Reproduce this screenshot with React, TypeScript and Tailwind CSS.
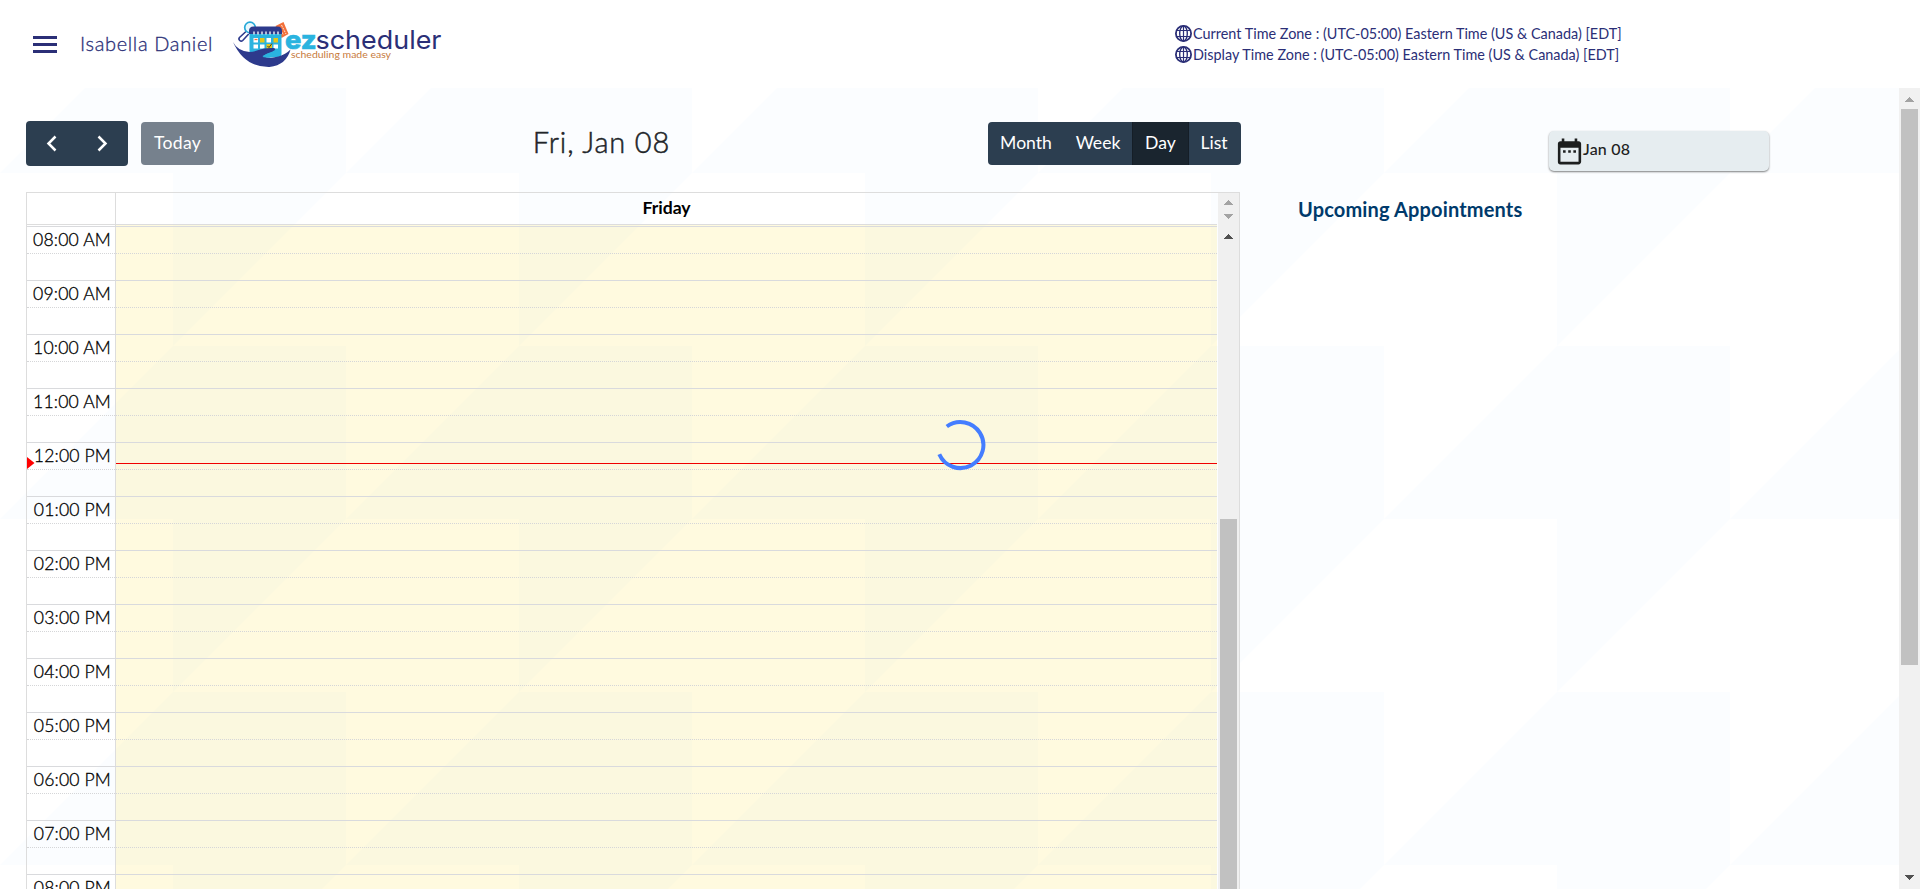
import React from "react";
import { MdDateRange } from "react-icons/md";

const hours = [
  "08:00 AM", "09:00 AM", "10:00 AM", "11:00 AM", "12:00 PM", "01:00 PM", "02:00 PM",
  "03:00 PM", "04:00 PM", "05:00 PM", "06:00 PM", "07:00 PM", "08:00 PM",
];

function Backdrop() {
  return (
    <svg className="absolute inset-0 h-full w-full" aria-hidden="true">
      <defs>
        <pattern id="tooth" width="346" height="346" patternUnits="userSpaceOnUse">
          <path d="M0 173 173 0H346V173L173 346V173Z" fill="#fbfdff" />
        </pattern>
      </defs>
      <rect width="100%" height="100%" fill="url(#tooth)" />
    </svg>
  );
}

function Logo() {
  return (
    <svg className="ml-[19px] mt-[1px] h-[50px] w-[215px] shrink-0" viewBox="-.5 0 215 50">
      <path d="M13.500 11.500 7 17.500a2.200 2.200 0 0 0 3.200 3l6-6.500" fill="#fff" stroke="#2d3a8c" strokeWidth="1.600" />
      <circle cx="17.500" cy="7.500" r="5.300" fill="#e9f8fd" stroke="#27a9d8" strokeWidth="1.700" />
      <path d="m43 6 8-4 5 12-7 4Z" fill="#f2703a" />
      <path d="m46 7 5 8m-2-10 4.500 9" stroke="#fff" strokeWidth=".8" strokeDasharray="2 1" />
      <rect x="17" y="8" width="32" height="29" rx="3" fill="#2ab3df" />
      <path d="M16.500 14V11q0-4.500 4.500-4.500h24Q49.500 6.500 49.500 11v3Z" fill="#2d3a8c" />
      <path d="M21.500 11.500v3m4-3v3m4-3v3m4-3v3m4-3v3m4-3v3m4-3v3" stroke="#fff" strokeWidth="1.300" />
      <path d="M21 18h4.500v4.500H21zm13 0h4.500v4.500H34zM21 24.500h4.500v4H21zm6.500 0H32v4h-4.500zm13.500 0h4.500v4H41zM27.500 30H32v3h-4.500z" fill="#fff" />
      <path d="M27.500 18H32v4.500h-4.500zm13.500 0h4.500v4.500H41zm-7 6h5.500v5H34z" fill="#e4c51d" />
      <path d="M22 19.500h3" stroke="#f2703a" strokeWidth="1.300" />
      <path d="m35 26 1.500 1.500 3-4" fill="none" stroke="#403d28" strokeWidth="1" />
      <path d="M.5 22Q5 31 17 32q4 0 9-2 6-2.500 15-2 4 1-1 3.500-5 2-10 4.500 7 3 16 .5 7-2 12-7Q54 45 37 47 12 47.500.5 22Z" fill="#2d3a8c" />
      <path d="M30 37q3-4 11-5l6-4v7q-7 4-17 2Z" fill="#2ab3df" />
      <text x="52.500" y="29" textLength="31.500" lengthAdjust="spacingAndGlyphs" fontFamily="Inter, sans-serif" fontSize="26" fontWeight="800" fill="#2ab3df" stroke="#2ab3df" strokeWidth=".6">ez</text>
      <text x="83" y="29" textLength="126" lengthAdjust="spacingAndGlyphs" fontFamily="Inter, sans-serif" fontSize="25.500" fontWeight="400" fill="#2b2f77">scheduler</text>
      <text x="58.500" y="38" textLength="100" lengthAdjust="spacingAndGlyphs" fontFamily="Lato, sans-serif" fontSize="10" fill="#c77a3c">scheduling made easy</text>
    </svg>
  );
}

function Globe() {
  return (
    <svg className="h-[17px] w-[17px] shrink-0" viewBox="0 0 17 17" fill="none" stroke="#2b2f77">
      <circle cx="8.500" cy="8.500" r="7.600" strokeWidth="1.800" />
      <ellipse cx="8.500" cy="8.500" rx="3.800" ry="7.500" strokeWidth="1.400" />
      <path d="M8.500 1v15M1.500 5.500h14M1.500 11.500h14" strokeWidth="1.200" />
    </svg>
  );
}

function Zone({ label }: { label: string }) {
  return (
    <div className="flex h-[21px] items-center">
      <Globe />
      <span className="ml-[1px] whitespace-nowrap text-[14.400px] tracking-[0.010px]">{label} Time Zone : (UTC-05:00) Eastern Time (US &amp; Canada) [EDT]</span>
    </div>
  );
}

function Arrow({ down = false, color }: { down?: boolean; color: string }) {
  return (
    <svg className="h-[5px] w-[9px] shrink-0" viewBox="0 0 9 5" fill={color} shapeRendering="crispEdges">
      <path d={down ? "M0 0h9L4.500 5Z" : "M0 5h9L4.500 0Z"} />
    </svg>
  );
}

function Chevron({ right = false }: { right?: boolean }) {
  return (
    <svg className="h-[17px] w-[11px]" viewBox="0 0 11 17" fill="none" stroke="#fff" strokeWidth="2.500">
      <path d={right ? "M1.500 1.500 8.500 8.500 1.500 15.500" : "M9.500 1.500 2.500 8.500 9.500 15.500"} />
    </svg>
  );
}

function Toolbar() {
  return (
    <div className="flex h-[45px] w-[1215px] items-center justify-between">
      <div className="flex w-[253px] items-center gap-[13px]">
        <div className="flex h-[45px] w-[102px] items-center justify-between rounded-[4px] bg-[#2c3e50] pl-[20px] pr-[20px]">
          <Chevron />
          <Chevron right />
        </div>
        <button className="h-[43px] w-[73px] rounded-[4px] bg-[#76818d] text-[17.600px] tracking-[0.300px] text-white">Today</button>
      </div>
      <h2 className="pb-[3px] pr-[64px] text-[29px] font-light tracking-[0.850px] text-[#212529] [-webkit-text-stroke:0.500px_#212529]">Fri, Jan 08</h2>
      <div className="flex h-[43px] overflow-hidden rounded-[4px] bg-[#2c3e50] text-[17.600px] text-white">
        <button className="w-[76px]">Month</button>
        <button className="w-[68px]">Week</button>
        <button className="w-[57px] border-x border-[#151e27] bg-[#1a252f]">Day</button>
        <button className="w-[52px] pr-[2px]">List</button>
      </div>
    </div>
  );
}

function Calendar() {
  return (
    <div className="mt-[26px] flex h-[697px] w-[1214px] border border-b-0 border-[#ddd]">
      <div className="relative flex w-[1190px] flex-col">
        <div className="flex h-[32px] shrink-0 border-b border-[#ddd]">
          <div className="w-[89px] border-r border-[#ddd]" />
          <div className="flex flex-1 items-center justify-center text-[17.600px] font-bold text-black">Friday</div>
        </div>
        <div className="relative flex-1 overflow-hidden">
          <div className="absolute inset-y-0 left-[88px] right-0 border-l border-[#ddd] bg-[rgba(255,220,40,0.15)]" />
          <div className="relative pt-px">
            {hours.map((h) => (
              <div key={h}>
                <div className="h-[27px] border-t border-[#d9dadd]">
                  <div className="flex h-[27px] w-[84px] items-center justify-end whitespace-nowrap text-[17.600px] font-light tracking-[0.150px] text-black [-webkit-text-stroke:0.300px_black]">{h}</div>
                </div>
                <div className="h-[27px] border-t border-dotted border-[#d5d6d8]" />
              </div>
            ))}
          </div>
          <div className="absolute left-[89px] right-0 top-[238px] h-px bg-[#f00000]" />
          <svg className="absolute left-0 top-[232px] h-[12px] w-[8px]" viewBox="0 0 8 12"><path d="M0 0 7.500 6 0 12Z" fill="red" /></svg>
          <svg className="absolute left-[909px] top-[194px] h-[52px] w-[52px]" viewBox="0 0 52 52" fill="none">
            <path d="M10.800 7.500A23 23 0 1 1 3.300 35.200" stroke="#447dff" strokeWidth="4" />
          </svg>
        </div>
      </div>
      <div className="ml-px flex w-[21px] flex-col items-center bg-[#f0f0f0]">
        <div className="flex h-[32px] flex-col items-center gap-[9px] pt-[7px]">
          <Arrow color="#a3a3a3" />
          <Arrow color="#a3a3a3" down />
        </div>
        <div className="mt-[9px]"><Arrow color="#505050" /></div>
        <div className="mt-auto h-[370px] w-[17px] bg-[#c1c1c1]" />
      </div>
    </div>
  );
}

export default function App() {
  return (
    <div className="relative flex h-[889px] w-[1920px] flex-col overflow-hidden bg-white font-['Lato',sans-serif]">
      <Backdrop />
      <header className="relative flex h-[88px] shrink-0 items-center bg-white pl-[33px] text-[#2b2f77]">
        <div className="flex w-[24px] flex-col gap-[4px]">
          <div className="h-[3px] bg-[#2b2f77]" />
          <div className="h-[3px] bg-[#2b2f77]" />
          <div className="h-[3px] bg-[#2b2f77]" />
        </div>
        <div className="ml-[23px] w-[133px] whitespace-nowrap pb-[2px] text-[20px] font-light tracking-[0.650px] [-webkit-text-stroke:0.300px_#2b2f77]">Isabella Daniel</div>
        <Logo />
        <div className="ml-[728px]">
          <Zone label="Current" />
          <Zone label="Display" />
        </div>
      </header>
      <main className="relative flex min-h-0 flex-1">
        <section className="w-[1298px] pl-[26px] pt-[33px]">
          <Toolbar />
          <Calendar />
        </section>
        <aside className="w-[601px] pt-[43px]">
          <div className="ml-[251px] flex h-[40px] w-[220px] items-center rounded-[5px] bg-[#e6edf0] pl-[5px] shadow-[0_1px_2px_rgba(0,0,0,0.5)]">
            <MdDateRange className="h-[31px] w-[31px] text-[#1d1f1f]" />
            <span className="-ml-[2px] pb-[4px] text-[16px] font-medium tracking-[0.200px] text-[#212121]">Jan 08</span>
          </div>
          <h3 className="mt-[24px] text-[20px] font-bold leading-[28px] tracking-[0.150px] text-[#003a6b]">Upcoming Appointments</h3>
        </aside>
        <div className="flex w-[21px] flex-col items-center bg-[#f1f1f1] pb-[9px] pt-[9px]">
          <Arrow color="#a3a3a3" />
          <div className="mt-[7px] h-[556px] w-[17px] bg-[#c1c1c1]" />
          <div className="mt-auto flex"><Arrow color="#505050" down /></div>
        </div>
      </main>
    </div>
  );
}
